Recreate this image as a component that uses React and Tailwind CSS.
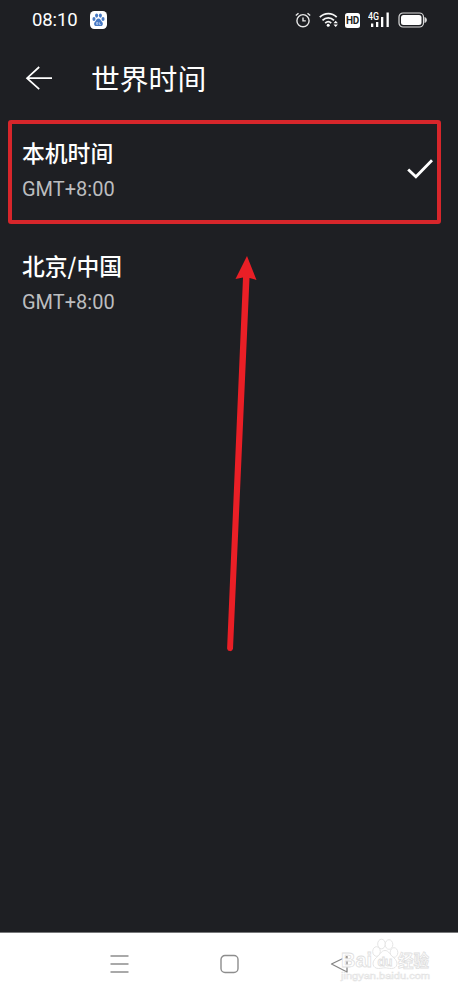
const zones = [
  { name: '本机时间', offset: 'GMT+8:00', selected: true },
  { name: '北京/中国', offset: 'GMT+8:00', selected: false },
]

function StatusBar() {
  return (
    <div className="h-10 flex items-center justify-between pl-8 pr-[31px] text-white">
      <div className="flex items-center gap-[11px]">
        <span className="w-[47px] text-[18.5px] leading-none tracking-[-0.1px] font-['Roboto',sans-serif] whitespace-nowrap">08:10</span>
        <svg width="17" height="18" viewBox="0 0 18 18" preserveAspectRatio="none">
          <rect width="18" height="18" rx="4.5" fill="#fff" />
          <g fill="#4779c4">
            <ellipse cx="4.2" cy="8" rx="1.6" ry="2" />
            <ellipse cx="7" cy="4.6" rx="1.6" ry="2.1" />
            <ellipse cx="11" cy="4.6" rx="1.6" ry="2.1" />
            <ellipse cx="13.8" cy="8" rx="1.6" ry="2" />
            <path d="M9 7.6c-2 0-2.3 1.8-3.4 2.8-2.5 2.2-.8 4.9 1.2 4.6h4.4c2 .3 3.7-2.4 1.2-4.6C11.3 9.4 11 7.6 9 7.6z" />
          </g>
          <path d="M7 11.4h1.3v2H7zM10 11.4v2h1.5" fill="none" stroke="#d4e2f7" strokeWidth=".7" />
        </svg>
      </div>
      <div className="flex items-center">
        <svg width="16" height="16" viewBox="0 0 16 16" fill="none" stroke="#e8e8e8" strokeWidth="1.4">
          <circle cx="8" cy="8.7" r="6.1" />
          <path d="M8 5.4v3.5h2.8M.8 3.5L3.5 1.2M15.2 3.5l-2.7-2.3" />
        </svg>
        <svg className="ml-[8px]" width="20" height="16" viewBox="0 0 20 16" fill="none" stroke="#f4f4f4" strokeWidth="1.8">
          <path d="M.8 5.2C5.6.5 13 .5 17.7 5.2M3.5 8.3c3.3-3.3 8.2-3.3 11.5 0M6.2 11.1c1.8-1.7 4.3-1.7 6 0" />
          <circle cx="9.2" cy="13.3" r="1.5" fill="#fff" stroke="none" />
          <path d="M14.5 11.2l2.2-2.4 2.2 2.4zM14.5 12.6l2.2 2.4 2.2-2.4z" fill="#fff" stroke="none" />
        </svg>
        <span className="ml-[6px] w-[15px] h-[15px] rounded-[2.5px] bg-white text-[#1e1f23] text-[10px] leading-[15px] font-bold text-center tracking-[-0.4px] font-['Roboto',sans-serif]">HD</span>
        <svg className="ml-[8px]" width="22" height="16" viewBox="0 0 22 16" fill="#fff">
          <text x="0" y="8.4" fontSize="10" fontWeight="500" fontFamily="Roboto, sans-serif" textLength="11" lengthAdjust="spacingAndGlyphs">4G</text>
          <rect x="3" y="11.5" width="2.3" height="3.5" />
          <rect x="8" y="10" width="2.3" height="5" />
          <rect x="13" y="5" width="2.3" height="10" />
          <rect x="18.5" y=".5" width="2.3" height="14.5" />
        </svg>
        <svg className="ml-[8px]" width="29" height="16" viewBox="0 0 29 16">
          <rect x="1" y="1" width="24.5" height="14" rx="4" fill="none" stroke="#ddd" strokeWidth="1.2" />
          <rect x="3" y="3" width="20.5" height="10" rx="2.5" fill="#fff" />
          <path d="M27 5.5c1.8 1 1.8 4 0 5z" fill="#ddd" stroke="#ddd" />
        </svg>
      </div>
    </div>
  )
}

function ZoneRow({ zone }) {
  return (
    <div className={`ml-2 w-[433px] h-[104px] flex items-center justify-between border-4 rounded-[3px] pl-[10px] pr-[4px] ${zone.selected ? 'border-[#d7262b]' : 'border-transparent'}`}>
      <div className="pb-[3px]">
        <div className="text-white text-[22.8px] leading-[34px] font-medium whitespace-nowrap">{zone.name}</div>
        <div className="mt-[2px] text-[#bcbdbf] text-[20px] leading-[34px] font-['Roboto',sans-serif]">{zone.offset}</div>
      </div>
      {zone.selected && (
        <svg className="mb-[6px]" width="26" height="22" viewBox="0 0 26 22" fill="none" stroke="#fff" strokeWidth="2.8">
          <path d="M1.2 11.5l7.7 7.3L25 2.2" />
        </svg>
      )}
    </div>
  )
}

function Watermark() {
  return (
    <svg className="absolute left-[338px] top-[936px]" width="98" height="50" viewBox="0 0 98 50" fill="#fff" stroke="#dedede" strokeWidth=".8">
      <g fontFamily="'Liberation Sans', 'Noto Sans CJK SC', sans-serif" fontWeight="700">
        <text x="3" y="31" fontSize="21" textLength="31" lengthAdjust="spacingAndGlyphs">Bai</text>
        <text x="60" y="31" fontSize="17" textLength="31" lengthAdjust="spacingAndGlyphs">经验</text>
      </g>
      <ellipse cx="38.5" cy="15.5" rx="3.8" ry="4.8" />
      <ellipse cx="43.5" cy="8" rx="3.8" ry="4.8" />
      <ellipse cx="51" cy="8.5" rx="3.8" ry="4.8" />
      <ellipse cx="56" cy="16.5" rx="3.8" ry="4.8" />
      <path d="M47 14.5c-4 0-5 4.5-8.5 7-6 5-3.5 11 2 11 3 0 4.5-.7 6.5-.7s3.5.7 6.5.7c5.5 0 8-6 2-11-3.500-2.500-4.500-7-8.500-7z" />
      <text x="39.5" y="30" fontSize="12.5" fontWeight="700" fontFamily="'Liberation Sans', sans-serif" textLength="15">du</text>
      <text x="3" y="43" fontSize="9" fontFamily="'Liberation Sans', sans-serif" stroke="#e2e2e2" strokeWidth=".5" textLength="89" lengthAdjust="spacingAndGlyphs">jingyan.baidu.com</text>
    </svg>
  )
}

export default function App() {
  return (
    <div className="relative w-[458px] h-[993px] overflow-hidden flex flex-col bg-[#1e1f23] font-['Noto_Sans_CJK_SC',sans-serif]">
      <StatusBar />
      <header className="h-20 flex items-center pl-[25px] pb-[4px] gap-[38px]">
        <svg width="28" height="24" viewBox="0 0 28 24" fill="none" stroke="#fff" strokeWidth="1.7">
          <path d="M14.2 1L2 12.2 14.2 23.2M2 12.2h25" />
        </svg>
        <h1 className="text-white text-[28.8px] leading-[40px] whitespace-nowrap">世界时间</h1>
      </header>
      <main className="flex-1 flex flex-col gap-[9px]">
        {zones.map((zone) => (
          <ZoneRow key={zone.name} zone={zone} />
        ))}
      </main>
      <nav className="h-[61px] bg-white border-t border-[#77787a] flex items-center justify-between pl-[110px] pr-[109px] pt-[2px]">
        <svg width="19" height="20" viewBox="0 0 19 20" stroke="#8d8d8d" strokeWidth="1.4">
          <path d="M.5 2h18M.5 10h18M.5 18h18" />
        </svg>
        <svg width="19" height="20" viewBox="0 0 19 20" fill="none" stroke="#8d8d8d" strokeWidth="1.4">
          <rect x="1" y="1.5" width="17" height="17" rx="4" />
        </svg>
        <svg width="19" height="20" viewBox="0 0 19 20" fill="none" stroke="#858585" strokeWidth="1.3">
          <path d="M17 2.5v15.5L1.5 10z" strokeLinejoin="round" />
        </svg>
      </nav>

      {/* pointer to the selected zone */}
      <svg className="absolute left-[220px] top-[250px]" width="44" height="408" viewBox="0 0 44 408" fill="#ea1f26">
        <path d="M27 6L36.5 30l-7-2L13 398.8a3 3 0 0 1-5.9-.3L23 27.5 15.500 29z" />
      </svg>
      <Watermark />
    </div>
  )
}
